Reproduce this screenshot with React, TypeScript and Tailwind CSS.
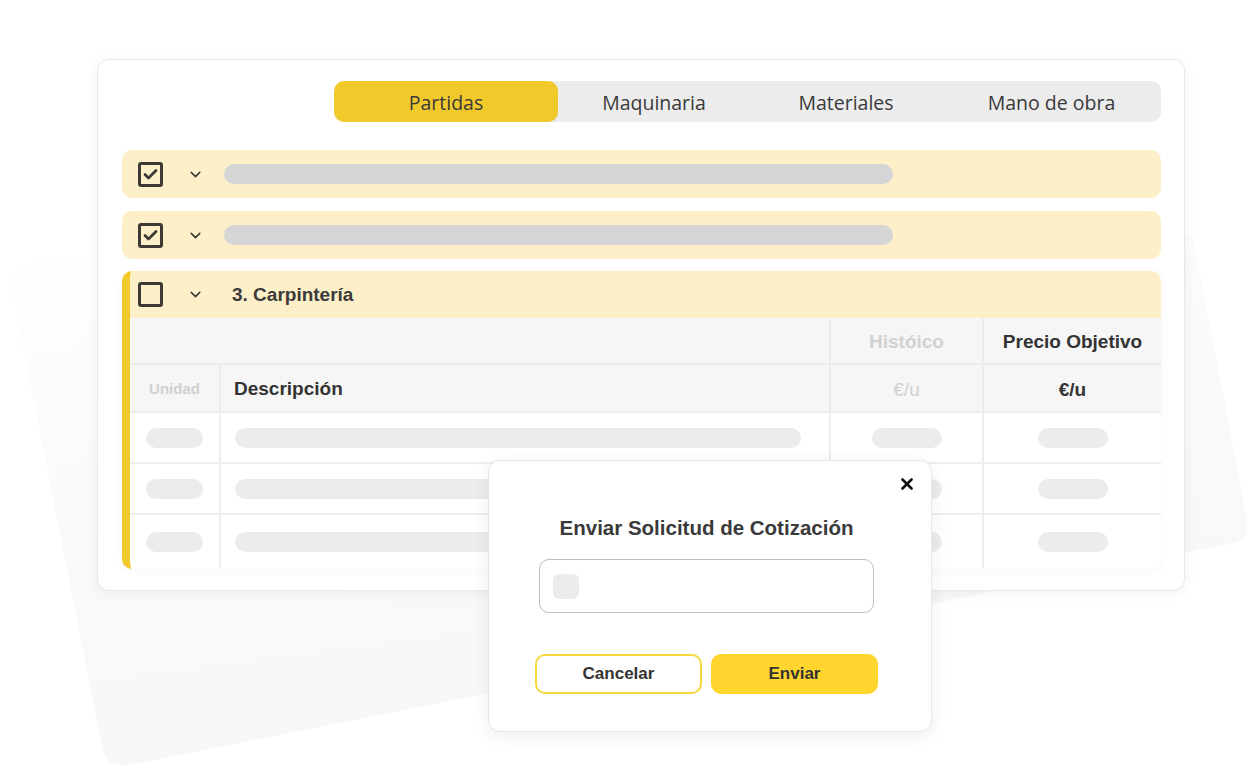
import { ChevronDown } from "lucide-react";

const tabs = [
  { label: "Partidas", w: "w-[224px]" },
  { label: "Maquinaria", w: "w-[192px]" },
  { label: "Materiales", w: "w-[192px]" },
  { label: "Mano de obra", w: "w-[219px]" },
];

function Checkbox({ checked }: { checked?: boolean }) {
  return (
    <div className="w-[25px] h-[25px] rounded-[3px] border-[3px] border-[#3d3a35] flex items-center justify-center shrink-0">
      {checked && (
        <svg width="15" height="12" viewBox="0 0 15 12" fill="none">
          <path d="M2 6.5 L5.5 10 L13 2.5" stroke="#3d3a35" strokeWidth="2.8" strokeLinecap="round" strokeLinejoin="round" />
        </svg>
      )}
    </div>
  );
}

function CollapsedRow() {
  return (
    <div className="h-[48px] rounded-[10px] bg-[#fdf0c9] flex items-center pl-[16px]">
      <Checkbox checked />
      <ChevronDown size={17} strokeWidth={2.2} className="ml-[24px] text-[#3a3a3a]" />
      <div className="ml-[20px] w-[669px] h-[20px] rounded-full bg-[#d5d5d5]" />
    </div>
  );
}

function Pill({ w }: { w: string }) {
  return <div className={`${w} h-[20px] rounded-full bg-[#ececec]`} />;
}

function DataRow({ h, last }: { h: string; last?: boolean }) {
  return (
    <div className={`grid grid-cols-[91px_610px_153px_177px] ${h} ${last ? "" : "border-b-2 border-[#eeeeee]"}`}>
      <div className="flex items-center justify-center border-r-2 border-[#eeeeee]">
        <Pill w="w-[57px]" />
      </div>
      <div className="flex items-center pl-[14px] border-r-2 border-[#eeeeee]">
        <Pill w="w-[566px]" />
      </div>
      <div className="flex items-center justify-center border-r-2 border-[#eeeeee]">
        <Pill w="w-[70px]" />
      </div>
      <div className="flex items-center justify-center">
        <Pill w="w-[70px]" />
      </div>
    </div>
  );
}

function Modal() {
  return (
    <div className="absolute left-[488px] top-[460px] w-[444px] h-[272px] bg-white rounded-[12px] border border-[#e6e6e6] shadow-[0_4px_18px_rgba(0,0,0,0.07)] font-['Liberation_Sans',Arial,sans-serif]">
      <button className="absolute right-[17px] top-[16px] w-[14px] h-[14px] flex items-center justify-center">
        <svg width="12" height="12" viewBox="0 0 12 12">
          <path d="M1.5 1.5 L10.5 10.5 M10.5 1.5 L1.5 10.5" stroke="#111" strokeWidth="2.6" strokeLinecap="round" />
        </svg>
      </button>
      <div className="flex flex-col pl-[46px] pt-[54px]">
        <h2 className="w-[343px] text-center text-[20.5px] leading-[26px] font-bold text-[#3a3a3a]">
          Enviar Solicitud de Cotización
        </h2>
        <div className="mt-[18px] ml-[4px] w-[335px] h-[54px] rounded-[10px] border border-[#bdbdbd] flex items-center pl-[13px]">
          <div className="w-[26px] h-[25px] rounded-[6px] bg-[#ececec]" />
        </div>
        <div className="mt-[41px] flex gap-[9px]">
          <button className="w-[167px] h-[40px] rounded-[10px] border-2 border-[#f8d83f] bg-white text-[17px] font-bold text-[#333]">
            Cancelar
          </button>
          <button className="w-[167px] h-[40px] rounded-[10px] bg-[#ffd52e] text-[17px] font-bold text-[#333]">
            Enviar
          </button>
        </div>
      </div>
    </div>
  );
}

export default function App() {
  return (
    <div className="relative w-[1255px] h-[776px] overflow-hidden bg-white font-['Liberation_Sans',Arial,sans-serif]">
      {/* faint tilted backdrop sheet */}
      <svg className="absolute inset-0" width="1255" height="776" viewBox="0 0 1255 776">
        <defs>
          <linearGradient id="sheet" x1="0" y1="0" x2="0.3" y2="1">
            <stop offset="0" stopColor="#ffffff" />
            <stop offset="0.45" stopColor="#fafafa" />
            <stop offset="1" stopColor="#f7f7f7" />
          </linearGradient>
        </defs>
        <path
          d="M30 262 L1175 232 Q1192 232 1195 248 L1247 520 Q1250 540 1230 544 L130 765 Q106 770 102 746 L12 290 Q8 264 30 262 Z"
          fill="url(#sheet)"
        />
      </svg>

      <div className="relative ml-[97px] mt-[59px] w-[1088px] h-[532px] bg-white rounded-[12px] border border-[#e8e8e8] shadow-[0_2px_14px_rgba(0,0,0,0.05)] pl-[24px] pr-[23px] pt-[21px]">
        {/* tabs */}
        <div className="flex justify-end">
          <div className="flex h-[41px] rounded-[10px] bg-[#ececec] font-['Open_Sans',sans-serif] text-[19.5px] text-[#3a3a3a]">
            {tabs.map((t, i) => (
              <div
                key={t.label}
                className={`${t.w} flex items-center justify-center pt-[2px] ${i === 0 ? "bg-[#f1c92b] rounded-[10px]" : ""}`}
              >
                {t.label}
              </div>
            ))}
          </div>
        </div>

        <div className="mt-[28px] flex flex-col gap-[13px]">
          <CollapsedRow />
          <CollapsedRow />
        </div>

        {/* expanded group */}
        <div className="mt-[12px] h-[298px] rounded-[10px] border-l-[8px] border-[#f1c92b] overflow-hidden shadow-[0_2px_8px_rgba(0,0,0,0.04)]">
          <div className="h-[47px] bg-[#fdf0c9] flex items-center pl-[8px]">
            <Checkbox />
            <ChevronDown size={17} strokeWidth={2.2} className="ml-[24px] text-[#3a3a3a]" />
            <span className="ml-[28px] pt-[2px] text-[19px] font-bold text-[#3a3a3a]">3. Carpintería</span>
          </div>

          <div className="grid grid-cols-[701px_153px_177px] h-[47px] bg-[#f6f6f6] border-b-2 border-[#ececec] text-[19px] font-bold">
            <div className="border-r-2 border-[#ececec]" />
            <div className="flex items-center justify-center pt-[4px] border-r-2 border-[#ececec] text-[#d2d2d2]">Históico</div>
            <div className="flex items-center justify-center pt-[4px] text-[#333]">Precio Objetivo</div>
          </div>
          <div className="grid grid-cols-[91px_610px_153px_177px] h-[48px] bg-[#f6f6f6] border-b-2 border-[#ececec] font-bold">
            <div className="flex items-center justify-center pt-[2px] border-r-2 border-[#ececec] text-[15px] text-[#d0d0d0]">Unidad</div>
            <div className="flex items-center pl-[13px] pt-[2px] border-r-2 border-[#ececec] text-[19px] text-[#333]">Descripción</div>
            <div className="flex items-center justify-center pt-[4px] border-r-2 border-[#ececec] text-[19px] text-[#d0d0d0] font-normal">€/u</div>
            <div className="flex items-center justify-center pt-[4px] text-[19px] text-[#333]">€/u</div>
          </div>

          <DataRow h="h-[51px]" />
          <DataRow h="h-[51px]" />
          <DataRow h="h-[53px]" last />
        </div>
      </div>

      <Modal />
    </div>
  );
}
